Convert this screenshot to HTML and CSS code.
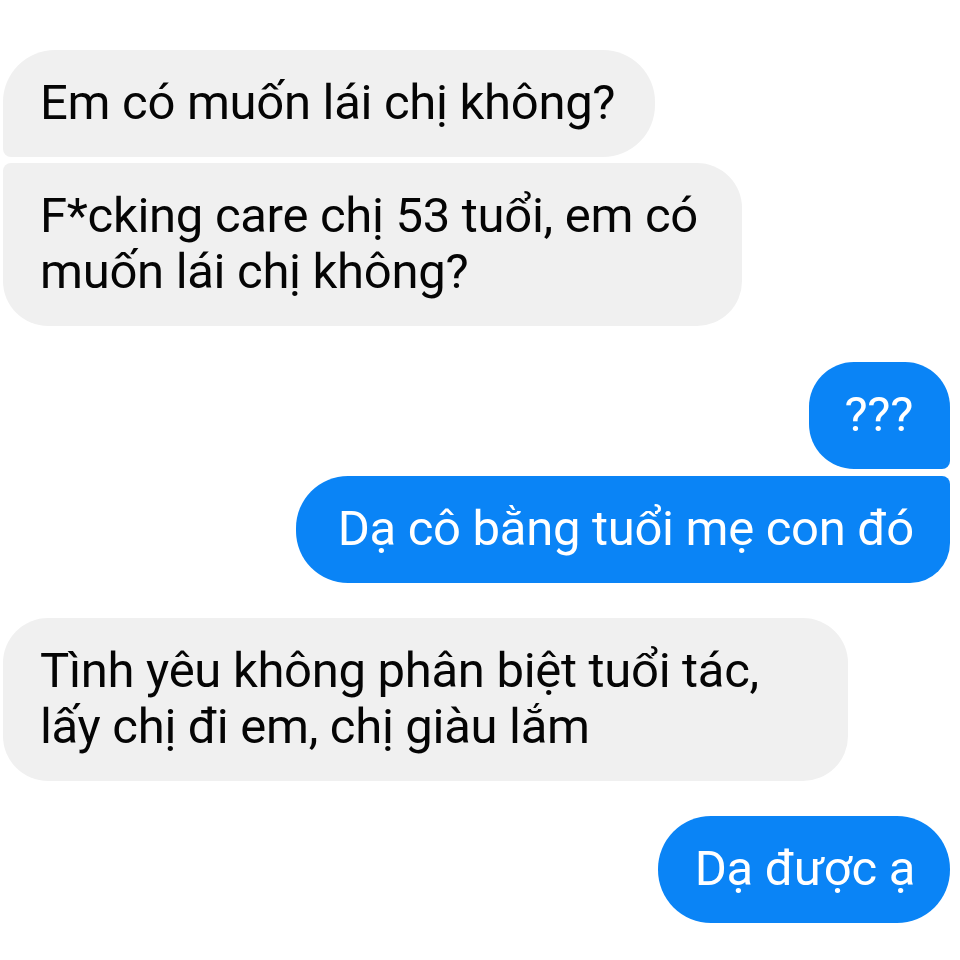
FILE: index.html
```html
<!DOCTYPE html>
<html lang="vi">
<head>
<meta charset="utf-8">
<link rel="stylesheet" href="styles.css">
</head>
<body>
<div class="chat">
  <div class="bubble in first">Em có muốn lái chị không?</div>
  <div class="bubble in last">F*cking care chị 53 tuổi, em có<br>muốn lái chị không?</div>
  <div class="bubble out first q">???</div>
  <div class="bubble out last">Dạ cô bằng tuổi mẹ con đó</div>
  <div class="bubble in single">Tình yêu không phân biệt tuổi tác,<br>lấy chị đi em, chị giàu lắm</div>
  <div class="bubble out single pill">Dạ được ạ</div>
</div>
</body>
</html>
```
FILE: styles.css
```css
html, body {
  margin: 0;
  padding: 0;
  background: #ffffff;
}
.chat {
  width: 960px;
  height: 960px;
  box-sizing: border-box;
  padding: 50px 10px 0 3px;
  display: flex;
  flex-direction: column;
  font-family: Roboto, "Noto Sans", sans-serif;
  font-size: 49px;
  line-height: 56px;
  letter-spacing: -0.3px;
}
.bubble {
  padding: 25px 40px 26px 37px;
  box-sizing: border-box;
}
.in {
  align-self: flex-start;
  background: #f0f0f0;
  color: #050505;
}
.out {
  align-self: flex-end;
  background: #0a84f6;
  color: #fff;
}
.in.first {
  border-radius: 52px 52px 52px 8px;
  margin-bottom: 6px;
}
.in.last {
  border-radius: 8px 45px 45px 45px;
  margin-bottom: 36px;
  padding-right: 44px;
}
.out.first {
  border-radius: 45px 45px 8px 45px;
  margin-bottom: 7px;
}
.out.last {
  border-radius: 52px 8px 40px 52px;
  margin-bottom: 35px;
  padding-left: 42px;
  padding-right: 36px;
}
.in.single {
  border-radius: 45px;
  margin-bottom: 35px;
  padding-right: 89px;
}
.out.pill {
  border-radius: 53px;
  padding-right: 35px;
}
.q {
  padding-left: 35px;
  padding-right: 37px;
}
```
